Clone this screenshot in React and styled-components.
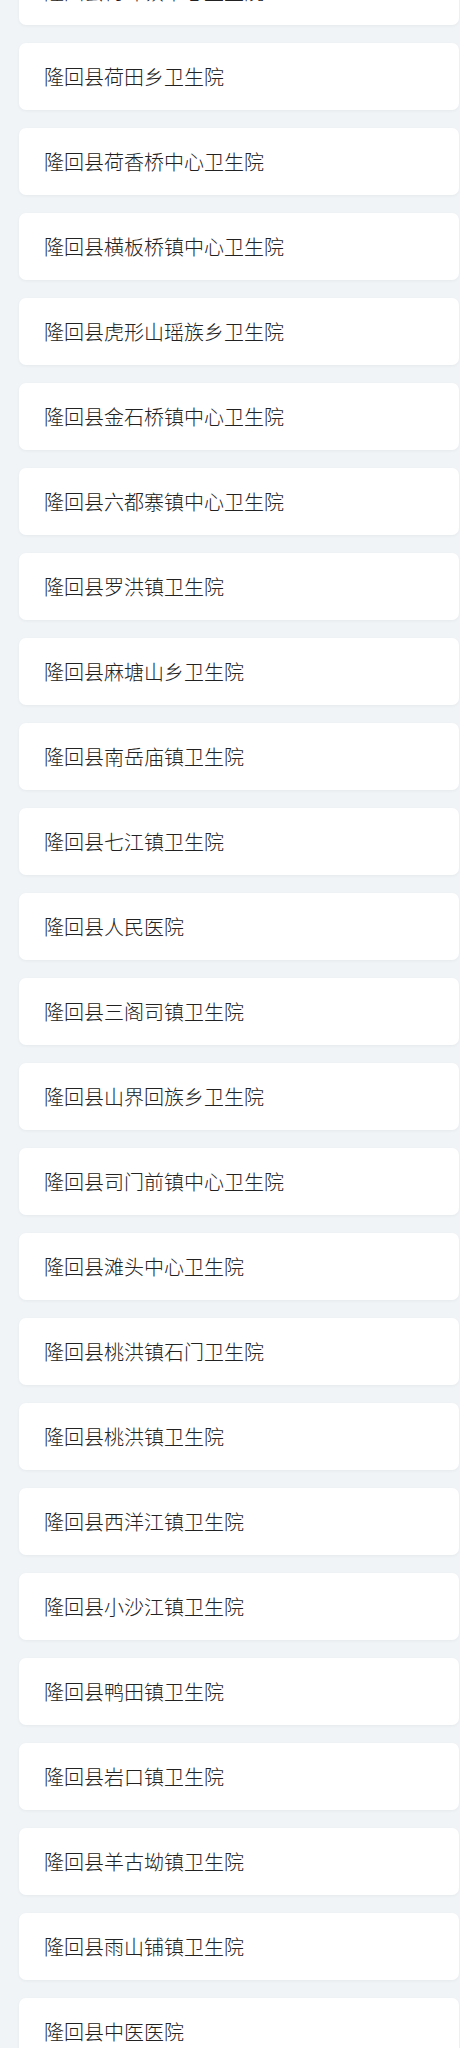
import React from "react";
import styled, { createGlobalStyle } from "styled-components";

const GlobalStyle = createGlobalStyle`
  html, body {
    margin: 0;
    padding: 0;
    background: #f1f4f6;
  }
  body {
    font-family: "Noto Sans CJK SC", "Noto Sans", sans-serif;
  }
`;

const Page = styled.div`
  width: 460px;
  height: 2048px;
  overflow: hidden;
  background: #f1f4f6;
`;

const List = styled.ul`
  list-style: none;
  margin: -42px 0 0 0;
  padding: 0 1px 0 19px;
  display: flex;
  flex-direction: column;
  gap: 18px;
`;

const Card = styled.li`
  height: 67px;
  box-sizing: border-box;
  padding: 0 25px;
  display: flex;
  align-items: center;
  background: #ffffff;
  border-radius: 7px;
  box-shadow: 0 1px 3px rgba(40, 60, 80, 0.06);
  font-size: 20px;
  font-weight: 300;
  color: #222222;
  letter-spacing: 0;
`;

const names = [
  "隆回县荷叶镇中心卫生院",
  "隆回县荷田乡卫生院",
  "隆回县荷香桥中心卫生院",
  "隆回县横板桥镇中心卫生院",
  "隆回县虎形山瑶族乡卫生院",
  "隆回县金石桥镇中心卫生院",
  "隆回县六都寨镇中心卫生院",
  "隆回县罗洪镇卫生院",
  "隆回县麻塘山乡卫生院",
  "隆回县南岳庙镇卫生院",
  "隆回县七江镇卫生院",
  "隆回县人民医院",
  "隆回县三阁司镇卫生院",
  "隆回县山界回族乡卫生院",
  "隆回县司门前镇中心卫生院",
  "隆回县滩头中心卫生院",
  "隆回县桃洪镇石门卫生院",
  "隆回县桃洪镇卫生院",
  "隆回县西洋江镇卫生院",
  "隆回县小沙江镇卫生院",
  "隆回县鸭田镇卫生院",
  "隆回县岩口镇卫生院",
  "隆回县羊古坳镇卫生院",
  "隆回县雨山铺镇卫生院",
  "隆回县中医医院",
];

export default function App() {
  return (
    <Page>
      <GlobalStyle />
      <List>
        {names.map((n) => (
          <Card key={n}>{n}</Card>
        ))}
      </List>
    </Page>
  );
}
